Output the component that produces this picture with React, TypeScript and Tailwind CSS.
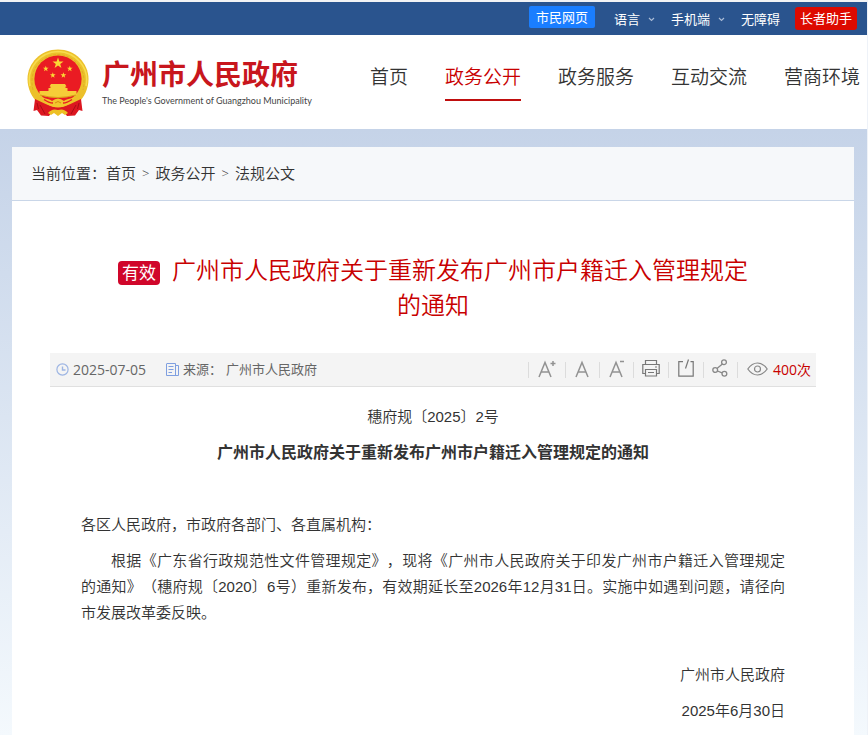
import type { ReactNode } from "react";

const navItems = ["首页", "政务公开", "政务服务", "互动交流", "营商环境"];
const activeItem = "政务公开";

function Emblem() {
  const star = (cx: number, cy: number, r: number) =>
    Array.from({ length: 10 }, (_, i) => {
      const a = (Math.PI / 5) * i - Math.PI / 2;
      const d = i % 2 === 0 ? r : r * 0.4;
      return `${(cx + d * Math.cos(a)).toFixed(2)},${(cy + d * Math.sin(a)).toFixed(2)}`;
    }).join(" ");
  return (
    <svg width="62" height="68" viewBox="0 0 62 68" aria-hidden="true" className="shrink-0">
      <path
        d="M31 0.5 C48 0.5 61.5 14 61.5 30 C61.5 40 57 48 52 53 L46 59 H16 L10 53 C5 48 0.5 40 0.5 30 C0.5 14 14 0.5 31 0.5 Z"
        fill="#ecc02a"
      />
      <path d="M3 37 C-1 18 14 3 31 2.5 C48 3 63 18 59 37" fill="none" stroke="#f7dc4e" strokeWidth="1.6" />
      <path d="M6 41 C1 20 15 6 31 5.5 C47 6 61 20 56 41" fill="none" stroke="#e0b024" strokeWidth="1" strokeDasharray="3 1.5" />
      <circle cx="31" cy="30" r="23.6" fill="#ea1b23" />
      <g fill="#fbd835">
        <polygon points={star(31, 14.3, 5.8)} />
        <polygon points={star(18.8, 19.7, 3)} />
        <polygon points={star(42.8, 19.7, 3)} />
        <polygon points={star(25.8, 26.3, 3)} />
        <polygon points={star(36.4, 26.3, 3)} />
      </g>
      <path d="M24 35 H38 L39.5 37.5 H38.5 V39 H40.5 V42 H49.5 V46 Q40 49 31 49 Q22 49 12.5 46 V42 H21.5 V39 H23.5 V37.5 H22.5 Z" fill="#f6cd38" />
      <path d="M13 46 Q31 51 49 46" stroke="#d79c17" strokeWidth="1" fill="none" />
      <path d="M8 50 Q18 55 26 58 H36 Q44 55 54 50 L55.5 62 L52 61 L48 66.5 L40 67 L37 63 H25 L22 67 L14 66.5 L10 61 L6.5 62 Z" fill="#dc1720" />
      <path d="M15 49 Q23 50 25 52 Q31 47 37 52 Q39 50 47 49 Q43 56 37 57 Q31 60 25 57 Q19 56 15 49 Z" fill="#f2c62d" />
      <path d="M17 50.5 Q22 54 26 54 M45 50.5 Q40 54 36 54" stroke="#ea1b23" strokeWidth="1.5" fill="none" />
      <path d="M28 54 Q31 51 34 54" fill="none" stroke="#d98a12" strokeWidth="1" />
      <path d="M21 64 Q25 59 31 61 Q37 59 41 64 L38 66 L35 64 L31 67 L27 64 L24 66 Z" fill="#edc024" />
      <path d="M13 56 L18 65 M10 54 L11.5 60 M49 56 L44 65 M52 54 L50.5 60" stroke="#a80d15" strokeWidth="1" />
    </svg>
  );
}

function Chevron() {
  return (
    <svg width="7" height="5" viewBox="0 0 7 5" fill="none" stroke="#a9bbd6" strokeWidth="1.2" aria-hidden="true" className="mt-[2px]">
      <path d="M1 1 L3.5 3.5 L6 1" />
    </svg>
  );
}

function Tool({ label, className, children }: { label: string; className: string; children: ReactNode }) {
  return (
    <button
      type="button"
      aria-label={label}
      className={`flex h-4 items-center justify-center border-l border-[#dcdcdc] ${className}`}
    >
      {children}
    </button>
  );
}

function LetterIcon({ mark }: { mark?: "plus" | "minus" }) {
  return (
    <svg width="20" height="20" viewBox="0 0 20 20" fill="none" stroke="#929292" strokeWidth="1.5" aria-hidden="true" className="mb-[2px]">
      <path d="M2 18 L8 3.5 L14 18 M4.4 13 H11.6" />
      {mark === "plus" && <path d="M13.5 4.5 H18.5 M16 2 V7" />}
      {mark === "minus" && <path d="M12 2.5 H16" />}
    </svg>
  );
}

function TopBar() {
  return (
    <div className="flex h-[33px] items-center justify-end bg-[#2a548e] pr-[10px] text-[13px] leading-5 text-white">
      <a href="#citizen" className="mb-[3px] h-[22px] rounded-[2px] bg-[#1a7eff] px-[7px] leading-[22px]">
        市民网页
      </a>
      <button type="button" className="ml-[19px] flex items-center gap-2">
        语言 <Chevron />
      </button>
      <button type="button" className="ml-4 flex items-center gap-2">
        手机端 <Chevron />
      </button>
      <a href="#accessible" className="ml-4">
        无障碍
      </a>
      <a href="#senior" className="ml-[15px] h-[23px] rounded-[3px] bg-[#dd0a00] px-[5px] leading-[23px]">
        长者助手
      </a>
    </div>
  );
}

function Header() {
  return (
    <header className="flex h-[94px] items-start justify-between bg-white pl-[27px] pr-[7px]">
      <a href="#home" className="mt-[14px] flex shrink-0 gap-[13px]">
        <Emblem />
        <span className="flex flex-col pt-[6px]">
          <span className="text-[28px] font-bold leading-[38px] text-[#c8161d]">广州市人民政府</span>
          <span className="whitespace-nowrap font-['Lato',sans-serif] text-[9px] leading-4 text-[#444]">
            The People's Government of Guangzhou Municipality
          </span>
        </span>
      </a>
      <nav className="flex shrink-0 gap-[37px] pt-6 text-[19px] font-[350] text-[#333]">
        {navItems.map((item) => (
          <a
            key={item}
            href={`#${item}`}
            className={`h-[42px] border-b-2 leading-9 ${
              item === activeItem ? "border-[#c00e0e] text-[#c80000]" : "border-transparent"
            }`}
          >
            {item}
          </a>
        ))}
      </nav>
    </header>
  );
}

function Breadcrumb() {
  return (
    <nav className="flex h-[54px] items-center border-b border-[#c9d6e8] bg-[#f6f8fa] px-[19px] text-[15px] font-[350] text-[#333]">
      <span>当前位置：</span>
      <a href="#home">首页</a>
      <span className="px-[6px] text-[13px]">&gt;</span>
      <a href="#open">政务公开</a>
      <span className="px-[6px] text-[13px]">&gt;</span>
      <a href="#docs">法规公文</a>
    </nav>
  );
}

function MetaBar() {
  return (
    <div className="flex h-[34px] items-center border-b border-[#e0e0e0] bg-[#f4f4f4] pl-[6px] pr-[5px] text-[13px] text-[#666]">
      <svg width="13" height="13" viewBox="0 0 13 13" fill="none" stroke="#9db5e3" aria-hidden="true">
        <circle cx="6.5" cy="6.5" r="5.6" strokeWidth="1.2" />
        <path d="M6.5 3.5 V7 H9.5" strokeWidth="1.4" />
      </svg>
      <time className="ml-1 text-sm">2025-07-05</time>
      <svg width="13" height="13" viewBox="0 0 13 13" fill="none" stroke="#7f9fe0" className="ml-5" aria-hidden="true">
        <path d="M1 0.5 H9.5 V12.5 H0.5 V0.5 M9.5 2.5 H12.5 V12.5 H9" />
        <path d="M2.5 3.5 H7.5 M2.5 6.5 H7.5 M2.5 9.5 H6" strokeWidth="1.2" />
      </svg>
      <span className="ml-1">来源：</span>
      <span className="ml-1">广州市人民政府</span>
      <div className="ml-auto flex items-center">
        <Tool label="放大字体" className="w-[37px]">
          <LetterIcon mark="plus" />
        </Tool>
        <Tool label="默认字体" className="w-[34px] pl-1">
          <LetterIcon />
        </Tool>
        <Tool label="缩小字体" className="w-[34px] pl-1">
          <LetterIcon mark="minus" />
        </Tool>
        <Tool label="打印" className="w-[35px]">
          <svg width="18" height="18" viewBox="0 0 18 18" fill="none" stroke="#777" strokeWidth="1.2" aria-hidden="true" className="mb-[3px]">
            <path d="M3.5 5.5 V1.5 H14.5 V5.5 M3.5 14.5 H0.8 V5.5 H17.2 V14.5 H14.5 M3.5 10.5 H14.5 V17 H3.5 Z M6 13.5 H12 M13 8 H15" />
          </svg>
        </Tool>
        <Tool label="导出" className="w-[35px]">
          <svg width="16" height="18" viewBox="0 0 16 18" fill="none" stroke="#777" strokeWidth="1.2" aria-hidden="true" className="mb-[3px]">
            <path d="M5 2.6 H0.8 V17.2 H15.2 V2.6 H12.5 M10.5 0.5 L7.5 9.5" />
          </svg>
        </Tool>
        <Tool label="分享" className="w-[34px]">
          <svg width="16" height="18" viewBox="0 0 16 18" fill="none" stroke="#888" strokeWidth="1.3" aria-hidden="true" className="mb-[3px]">
            <circle cx="12" cy="3.2" r="2.4" />
            <circle cx="3.2" cy="11" r="2.4" />
            <circle cx="12.4" cy="14.8" r="2.4" />
            <path d="M10.4 5 L5 9.4 M5.5 12 L10.1 13.9" />
          </svg>
        </Tool>
        <span className="flex h-4 items-center border-l border-[#dcdcdc] pl-[9px]">
          <svg width="21" height="14" viewBox="0 0 21 14" fill="none" stroke="#888" strokeWidth="1.2" aria-hidden="true" className="mb-[2px]">
            <path d="M0.8 7 Q5 1 10.5 1 Q16 1 20.2 7 Q16 13 10.5 13 Q5 13 0.8 7 Z" />
            <circle cx="10.5" cy="7" r="3" />
          </svg>
          <span className="ml-[5px] text-sm text-[#c80000]">400次</span>
        </span>
      </div>
    </div>
  );
}

function Article() {
  return (
    <article className="px-[38px] pb-3 pt-[51px]">
      <h1 className="mb-[31px] px-16 text-center text-2xl font-[350] leading-[35px] text-[#c80000]">
        <span className="mr-3 inline-block h-6 rounded-[4px] bg-[#d0062a] px-1 align-middle text-[17px] font-normal leading-6 text-white">
          有效
        </span>
        广州市人民政府关于重新发布广州市户籍迁入管理规定的通知
      </h1>
      <MetaBar />
      <div className="flex flex-col gap-[10px] px-[31px] pt-[17px] font-['Liberation_Sans','Noto_Sans_CJK_SC',sans-serif] text-[15px] font-[350] leading-[26px] text-[#333] [text-spacing-trim:space-all]">
        <p className="text-center">穗府规〔2025〕2号</p>
        <h2 className="mb-9 text-center text-base font-bold leading-[26px]">
          广州市人民政府关于重新发布广州市户籍迁入管理规定的通知
        </h2>
        <p>各区人民政府，市政府各部门、各直属机构：</p>
        <p className="text-justify indent-[30px]">
          根据《广东省行政规范性文件管理规定》，现将《广州市人民政府关于印发广州市户籍迁入管理规定的通知》（穗府规〔2020〕6号）重新发布，有效期延长至2026年12月31日。实施中如遇到问题，请径向市发展改革委反映。
        </p>
        <p className="mt-[26px] text-right">广州市人民政府</p>
        <p className="text-right">2025年6月30日</p>
      </div>
    </article>
  );
}

export default function App() {
  return (
    <div
      lang="zh-CN"
      className="flex min-h-screen flex-col border-r border-t-2 border-r-[#eef2f8] border-t-[#f2f3f5] font-['Open_Sans','Noto_Sans_CJK_SC',sans-serif]"
    >
      <TopBar />
      <Header />
      <div className="flex-1 bg-linear-to-b from-[#c5d3e8] to-[#f4f9fd] pl-3 pr-[13px] pt-[18px]">
        <main className="bg-white">
          <Breadcrumb />
          <Article />
        </main>
      </div>
    </div>
  );
}
